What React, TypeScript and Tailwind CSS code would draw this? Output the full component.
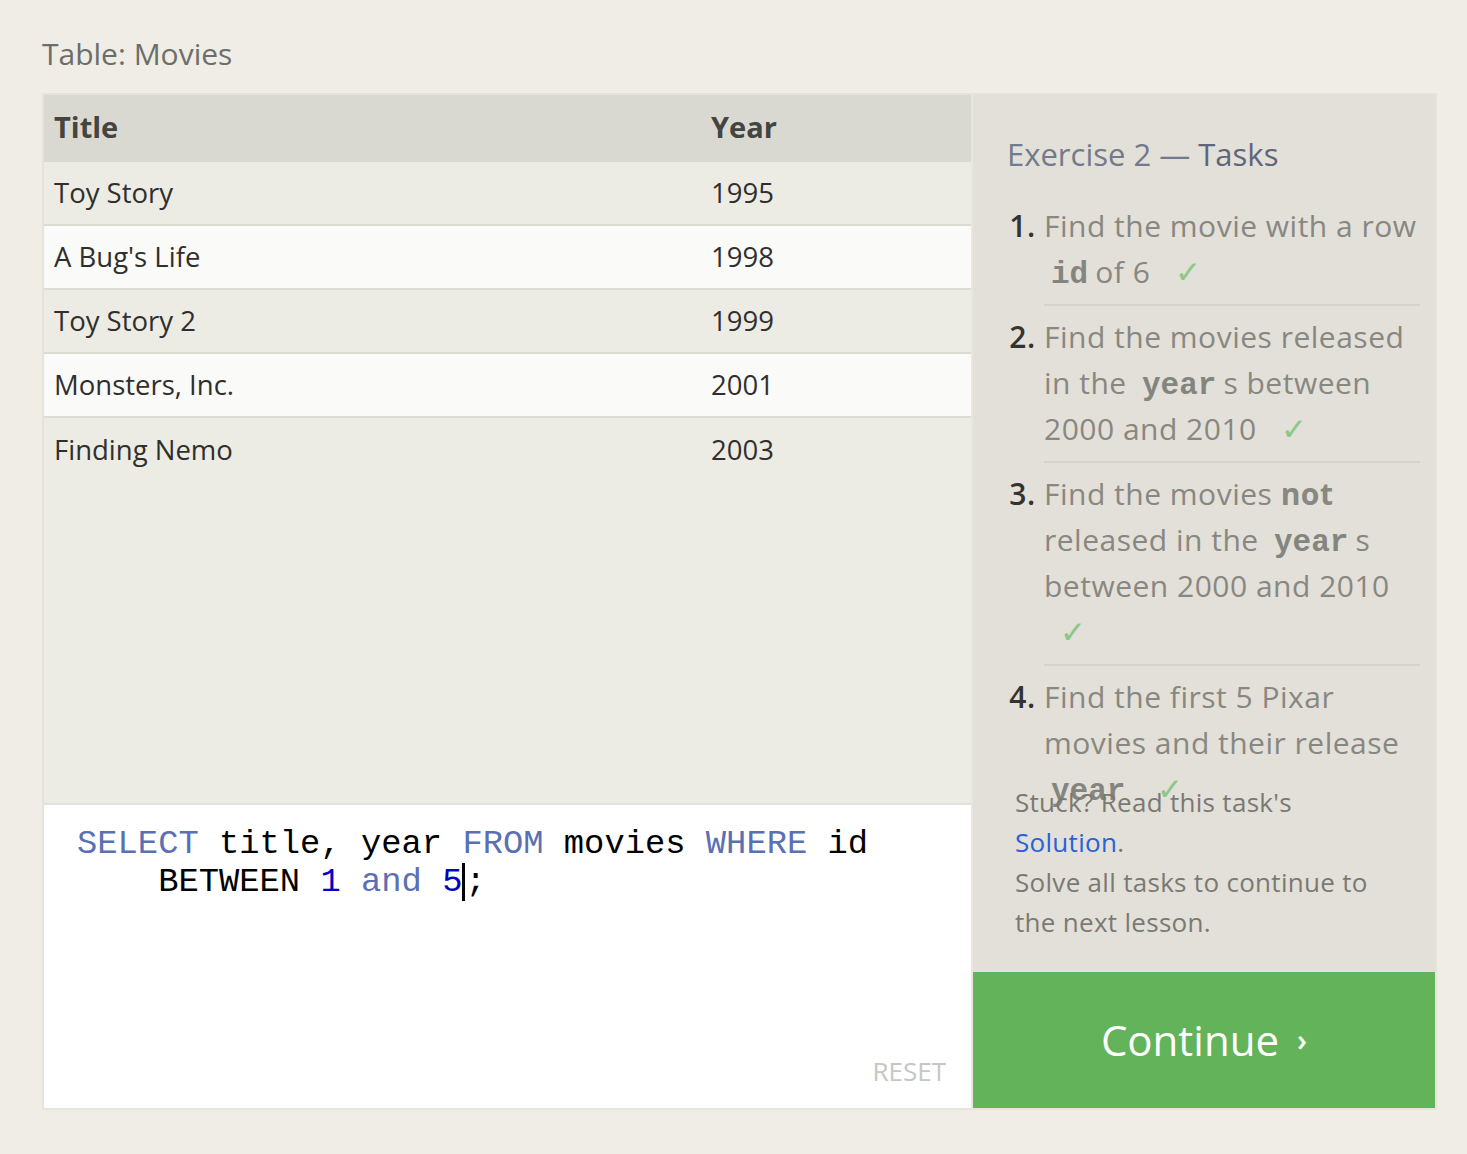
import React from "react";

// SQL exercise page: table preview + query editor on the left, task list on the right.

const rows = [
  { title: "Toy Story", year: 1995 },
  { title: "A Bug's Life", year: 1998 },
  { title: "Toy Story 2", year: 1999 },
  { title: "Monsters, Inc.", year: 2001 },
  { title: "Finding Nemo", year: 2003 },
];

const sans = "font-['Open_Sans','Noto_Sans',sans-serif]";
const mono = "font-['Liberation_Mono','Courier_New',monospace]";

function Code({ children }: { children: React.ReactNode }) {
  return (
    <code className={`${mono} px-[7px] text-[31px] font-bold leading-none tracking-normal text-[#858580]`}>
      {children}
    </code>
  );
}

function Check() {
  return <span className="ml-4 text-[31px] leading-none text-[#8cc886]">✓</span>;
}

export default function App() {
  return (
    <div className={`${sans} min-h-screen bg-[#efede6] px-[42px] pt-[34px]`}>
      <h2 className="text-[30px] leading-[40px] text-[#6d6d6a]">Table: Movies</h2>

      <div className="mt-[19px] flex w-[1395px] border-2 border-[#e5e3dc]">
        {/* left: table + editor */}
        <div className="flex w-[927px] flex-col">
          <div className="h-[708px] bg-[#ecebe4]">
            <div className="flex h-[67px] items-center bg-[#dad9d1] px-[10px] pb-[3px] text-[29px] font-bold text-[#444441]">
              <div className="w-[657px]">Title</div>
              <div>Year</div>
            </div>
            {rows.map((r, i) => (
              <div
                key={r.title}
                className={`flex h-[64px] items-center px-[10px] text-[27.5px] text-[#2f2f2d] ${
                  i % 2 === 1 ? "bg-[#fafaf8]" : "bg-[#ecebe4]"
                } ${i < rows.length - 1 ? "border-b-2 border-[#dcdbd4]" : ""}`}
              >
                <div className="w-[657px]">{r.title}</div>
                <div>{r.year}</div>
              </div>
            ))}
          </div>
          <div className="flex h-[305px] flex-col border-t-2 border-[#e2e1da] bg-white pl-[33px] pr-[25px] pt-[20px] pb-[21px]">
            <pre className={`${mono} text-[33.8px] leading-[38px] text-black`}>
              <span className="text-[#5b6fb3]">SELECT</span> title, year{" "}
              <span className="text-[#5b6fb3]">FROM</span> movies{" "}
              <span className="text-[#5b6fb3]">WHERE</span> id
              {"\n    "}BETWEEN <span className="text-[#0000c8]">1</span>{" "}
              <span className="text-[#5b6fb3]">and</span>{" "}
              <span className="text-[#0000c8]">5</span>
              <span className="inline-block h-[38px] w-[3px] align-top bg-black" />;
            </pre>
            <button className="mt-auto self-end text-[26px] leading-[32px] text-[#c6c6c4]">RESET</button>
          </div>
        </div>

        {/* right: tasks */}
        <div className="flex w-[464px] flex-col border-l-2 border-[#e8e6df] bg-[#e2e0d8]">
          <div className="h-[687px] pl-[34px] pr-[15px] pt-[40px]">
            <h3 className="text-[31px] leading-[38px] text-[#737a8c]">
              Exercise 2 — <span className="text-[#5f6679]">Tasks</span>
            </h3>
            <ol className="mt-[22px] list-decimal pl-[37px] text-[30px] leading-[46px] tracking-[0.5px] text-[#888781] marker:font-semibold marker:text-[#333331]">
              <li className="border-b-2 border-[#d6d4ca] pt-[8px] pb-[9px]">
                Find the movie with a row <Code>id</Code>of 6 <Check />
              </li>
              <li className="border-b-2 border-[#d6d4ca] pt-[8px] pb-[9px]">
                Find the movies released in the <Code>year</Code>s between 2000 and 2010 <Check />
              </li>
              <li className="border-b-2 border-[#d6d4ca] pt-[8px] pb-[9px]">
                Find the movies <b className="font-bold">not</b> released in the <Code>year</Code>s
                between 2000 and 2010 <Check />
              </li>
              <li className="pt-[8px] pb-[9px]">
                Find the first 5 Pixar movies and their release <Code>year</Code> <Check />
              </li>
            </ol>
          </div>
          <p className="relative pl-[42px] pr-[40px] text-[26px] leading-[40px] tracking-[0.3px] text-[#7a7974]">
            Stuck? Read this task's
            <br />
            <a className="text-[#2563d9]">Solution</a>.
            <br />
            Solve all tasks to continue to the next lesson.
          </p>
          <button className="mt-auto flex h-[136px] items-center justify-center gap-[18px] bg-[#62b35a] text-white">
            <span className="text-[42px] leading-none">Continue</span>
            <span className="text-[30px] font-semibold leading-none">›</span>
          </button>
        </div>
      </div>
    </div>
  );
}
